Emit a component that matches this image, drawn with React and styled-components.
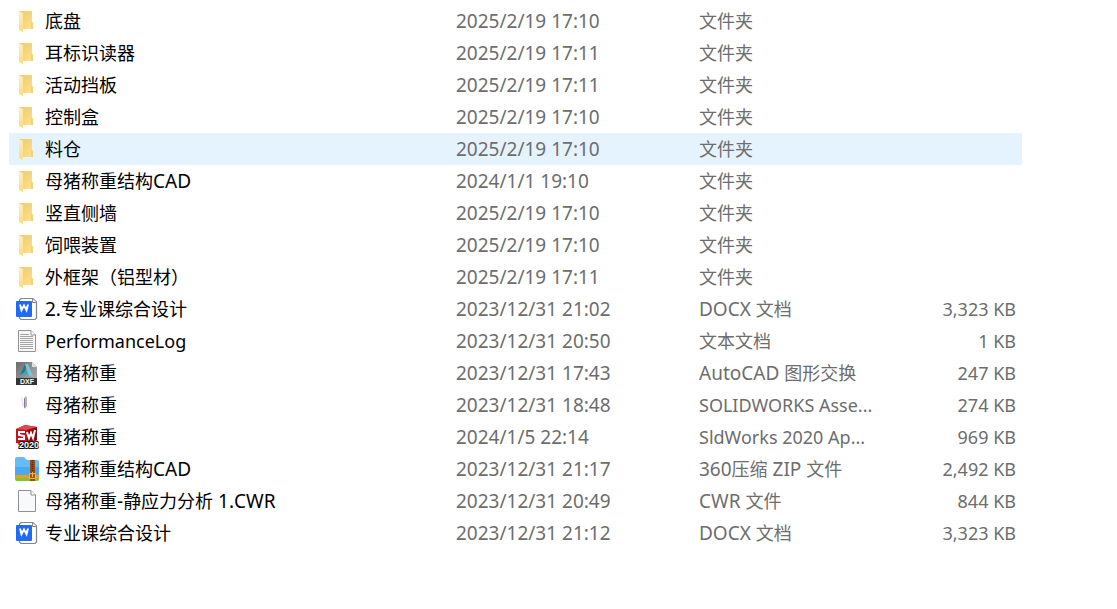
import React from "react";
import styled, { createGlobalStyle } from "styled-components";

const IconText = styled.text`
	fill: #fff;
	font-family: "Liberation Sans", sans-serif;
	font-size: ${(props) => props.$size}px;
	font-weight: bold;
`;

const files = [
	{ icon: "folder", name: "底盘", date: "2025/2/19 17:10", type: "文件夹" },
	{ icon: "folder", name: "耳标识读器", date: "2025/2/19 17:11", type: "文件夹" },
	{ icon: "folder", name: "活动挡板", date: "2025/2/19 17:11", type: "文件夹" },
	{ icon: "folder", name: "控制盒", date: "2025/2/19 17:10", type: "文件夹" },
	{ icon: "folder", name: "料仓", date: "2025/2/19 17:10", type: "文件夹", active: true },
	{ icon: "folder", name: "母猪称重结构CAD", date: "2024/1/1 19:10", type: "文件夹" },
	{ icon: "folder", name: "竖直侧墙", date: "2025/2/19 17:10", type: "文件夹" },
	{ icon: "folder", name: "饲喂装置", date: "2025/2/19 17:10", type: "文件夹" },
	{ icon: "folder", name: "外框架（铝型材）", date: "2025/2/19 17:11", type: "文件夹" },
	{ icon: "word", name: "2.专业课综合设计", date: "2023/12/31 21:02", type: "DOCX 文档", size: "3,323 KB" },
	{ icon: "text", name: "PerformanceLog", date: "2023/12/31 20:50", type: "文本文档", size: "1 KB" },
	{ icon: "dxf", name: "母猪称重", date: "2023/12/31 17:43", type: "AutoCAD 图形交换", size: "247 KB" },
	{ icon: "assembly", name: "母猪称重", date: "2023/12/31 18:48", type: "SOLIDWORKS Asse...", size: "274 KB" },
	{ icon: "solidworks", name: "母猪称重", date: "2024/1/5 22:14", type: "SldWorks 2020 Ap...", size: "969 KB" },
	{ icon: "zip", name: "母猪称重结构CAD", date: "2023/12/31 21:17", type: "360压缩 ZIP 文件", size: "2,492 KB" },
	{ icon: "blank", name: "母猪称重-静应力分析 1.CWR", date: "2023/12/31 20:49", type: "CWR 文件", size: "844 KB" },
	{ icon: "word", name: "专业课综合设计", date: "2023/12/31 21:12", type: "DOCX 文档", size: "3,323 KB" },
];

const icons = {
	folder: (
		<>
			<defs>
				<linearGradient id="folderBack" x1="0" x2="1" y1="0" y2="1">
					<stop offset="0" stopColor="#eec96f" />
					<stop offset="1" stopColor="#ffe08a" />
				</linearGradient>
				<linearGradient id="folderFlap" x1="0" x2="0" y1="0" y2="1">
					<stop offset="0" stopColor="#ffeeb8" />
					<stop offset="1" stopColor="#fbdc84" />
				</linearGradient>
			</defs>
			<path d="M4 2H17V13L18 14V20H4Z" fill="url(#folderBack)" />
			<path d="M16 13H17L18 14V20H16Z" fill="#f5d077" />
			<path d="M4 2L8 4V23L4 21Z" fill="url(#folderFlap)" />
		</>
	),
	word: (
		<>
			<path d="M6 1.5H18L21.5 5V21L20 22.5H6L4.5 21V3Z" fill="#fff" stroke="#858585" strokeWidth="1.2" />
			<path d="M17.5 1.5V5.5H21.5" fill="#eee" stroke="#858585" />
			<rect x="1" y="4" width="16" height="16" rx="1" fill="#1f6bf2" />
			<path d="M5 7.5L6.5 13L9 8.5L11.5 13L13 7.5" fill="none" stroke="#fff" strokeWidth="2" />
		</>
	),
	text: (
		<>
			<path d="M3.5 1.5H16L20.5 6V22.5H3.5Z" fill="#f7f7f7" stroke="#949494" />
			<path d="M16 1.5V6H20.5" fill="#fff" stroke="#949494" />
			<path d="M5 5.5H14M5 7.5H18M5 9.5H18M5 11.5H18M5 13.5H18M5 15.5H18M5 17.5H18M5 19.5H18" stroke="#a5a5a5" />
		</>
	),
	blank: (
		<>
			<path d="M3.5 1.5H16L20.5 6V22.5H3.5Z" fill="#f8f9fa" stroke="#8f8f8f" />
			<path d="M16 1.5V6H20.5" fill="#fff" stroke="#8f8f8f" />
		</>
	),
	dxf: (
		<>
			<defs>
				<linearGradient id="dxfPage" x1="0" x2="1" y1="0" y2="1">
					<stop offset="0" stopColor="#6b6b6b" />
					<stop offset="1" stopColor="#b9b9b9" />
				</linearGradient>
			</defs>
			<path d="M1 1H17L22 6V24H1Z" fill="url(#dxfPage)" />
			<path d="M17 1L22 6H17Z" fill="#dedede" />
			<path d="M5 14L10 3H12L9 14Z" fill="#167d91" />
			<path d="M10 3H13L18 15H14Z" fill="#79c4dc" />
			<path d="M5 14L11 10L13 12L9 14Z" fill="#38a9b9" />
			<rect x="1" y="17" width="21" height="7" fill="#343434" />
			<IconText x="12" y="23" $size={7} textAnchor="middle">DXF</IconText>
		</>
	),
	assembly: (
		<>
			<path d="M6 5L7 3L9 12L7 14Z" fill="#e9e7eb" />
			<path d="M9 5L11 3L12 5V13L10 16L9 14Z" fill="#b9afbe" />
			<path d="M9 6L10 5V15L9 14Z" fill="#8a788f" />
		</>
	),
	solidworks: (
		<>
			<path d="M1 4L10 0L22 2V15L15 20L1 18Z" fill="#c9131c" />
			<path d="M1 4L10 0L22 2L13 5Z" fill="#dd4b50" />
			<path d="M12 5L22 2V15L12 20Z" fill="#8d0b12" />
			<path d="M10 7H4V10L9 11V14H3" fill="none" stroke="#fff" strokeWidth="2" />
			<path d="M12 7L14 13L16 8L18 13L20 5" fill="none" stroke="#fff" strokeWidth="2" />
			<IconText x="14" y="23" $size={9} textAnchor="middle" stroke="#111" strokeWidth="2" paintOrder="stroke">2020</IconText>
		</>
	),
	zip: (
		<>
			<path d="M0 2Q0 0 2 0H9L12 3H22Q24 3 24 5V18H0Z" fill="#65bdf7" />
			<path d="M0 10H24V19H0Z" fill="#4aa9f2" />
			<path d="M0 18H24V22H0Z" fill="#f49a1f" />
			<path d="M0 21H24V22Q24 24 22 24H2Q0 24 0 22Z" fill="#7cc832" />
			<path d="M15 3H20V24H15Z" fill="#9c4b16" />
			<path d="M17.5 3V16" stroke="#5e2a0b" strokeWidth="2" strokeDasharray="1 1" />
			<path d="M14.5 16.5H20.5V21.5H14.5Z" fill="#a3551a" stroke="#f0bd42" />
			<path d="M17.5 15V20" stroke="#f0bd42" />
		</>
	),
};

// Latin words next to Chinese ones are set slightly larger to look the same height.
function Label({ text }) {
	const parts = text.split(/([ -~]+)/).filter(Boolean);
	if (parts.length === 1) return text;
	return parts.map((part, i) => (/^[ -~]/.test(part) ? <Latin key={i}>{part}</Latin> : part));
}

function FileRow({ file }) {
	return (
		<Row $active={file.active}>
			<NameCell>
				<FileName>
					<Icon viewBox="0 0 24 24" aria-hidden="true">
						{icons[file.icon]}
					</Icon>
					<span>
						<Label text={file.name} />
					</span>
				</FileName>
			</NameCell>
			<DateCell>{file.date}</DateCell>
			<Cell>
				<Label text={file.type} />
			</Cell>
			<SizeCell>{file.size}</SizeCell>
		</Row>
	);
}

function App() {
	return (
		<Container>
			<GlobalStyle />
			<FileTable>
				<colgroup>
					<col />
					<Column $width={243} />
					<Column $width={190} />
					<Column $width={133} />
				</colgroup>
				<tbody>
					{files.map((file, i) => (
						<FileRow key={i} file={file} />
					))}
				</tbody>
			</FileTable>
		</Container>
	);
}

export default App;

const GlobalStyle = createGlobalStyle`
	body {
		margin: 0;
		background: #fff;
		font-family: "Noto Sans", "Noto Sans CJK SC", sans-serif;
	}
`;

const Container = styled.main`
	padding: 5px 95px 40px 9px;
`;

const FileTable = styled.table`
	width: 100%;
	table-layout: fixed;
	border-collapse: collapse;
	font-size: 18px;
	white-space: nowrap;
`;

const Column = styled.col`
	width: ${(props) => props.$width}px;
`;

const Row = styled.tr`
	height: 32px;
	background: ${(props) => (props.$active ? "#e5f3ff" : "transparent")};
	cursor: default;
`;

const Cell = styled.td`
	height: 32px;
	padding: 0;
	color: #6d6d6d;
	line-height: 30px;
	overflow: hidden;
`;

const NameCell = styled(Cell)`
	color: #000;
`;

const DateCell = styled(Cell)`
	font-size: 19px;
`;

const SizeCell = styled(Cell)`
	padding-right: 6px;
	text-align: right;
`;

const FileName = styled.div`
	display: flex;
	align-items: center;
	gap: 6px;
	height: 32px;
	padding-left: 6px;
`;

const Icon = styled.svg`
	flex: none;
	width: 24px;
	height: 24px;
`;

const Latin = styled.span`
	font-size: 19px;
`;
